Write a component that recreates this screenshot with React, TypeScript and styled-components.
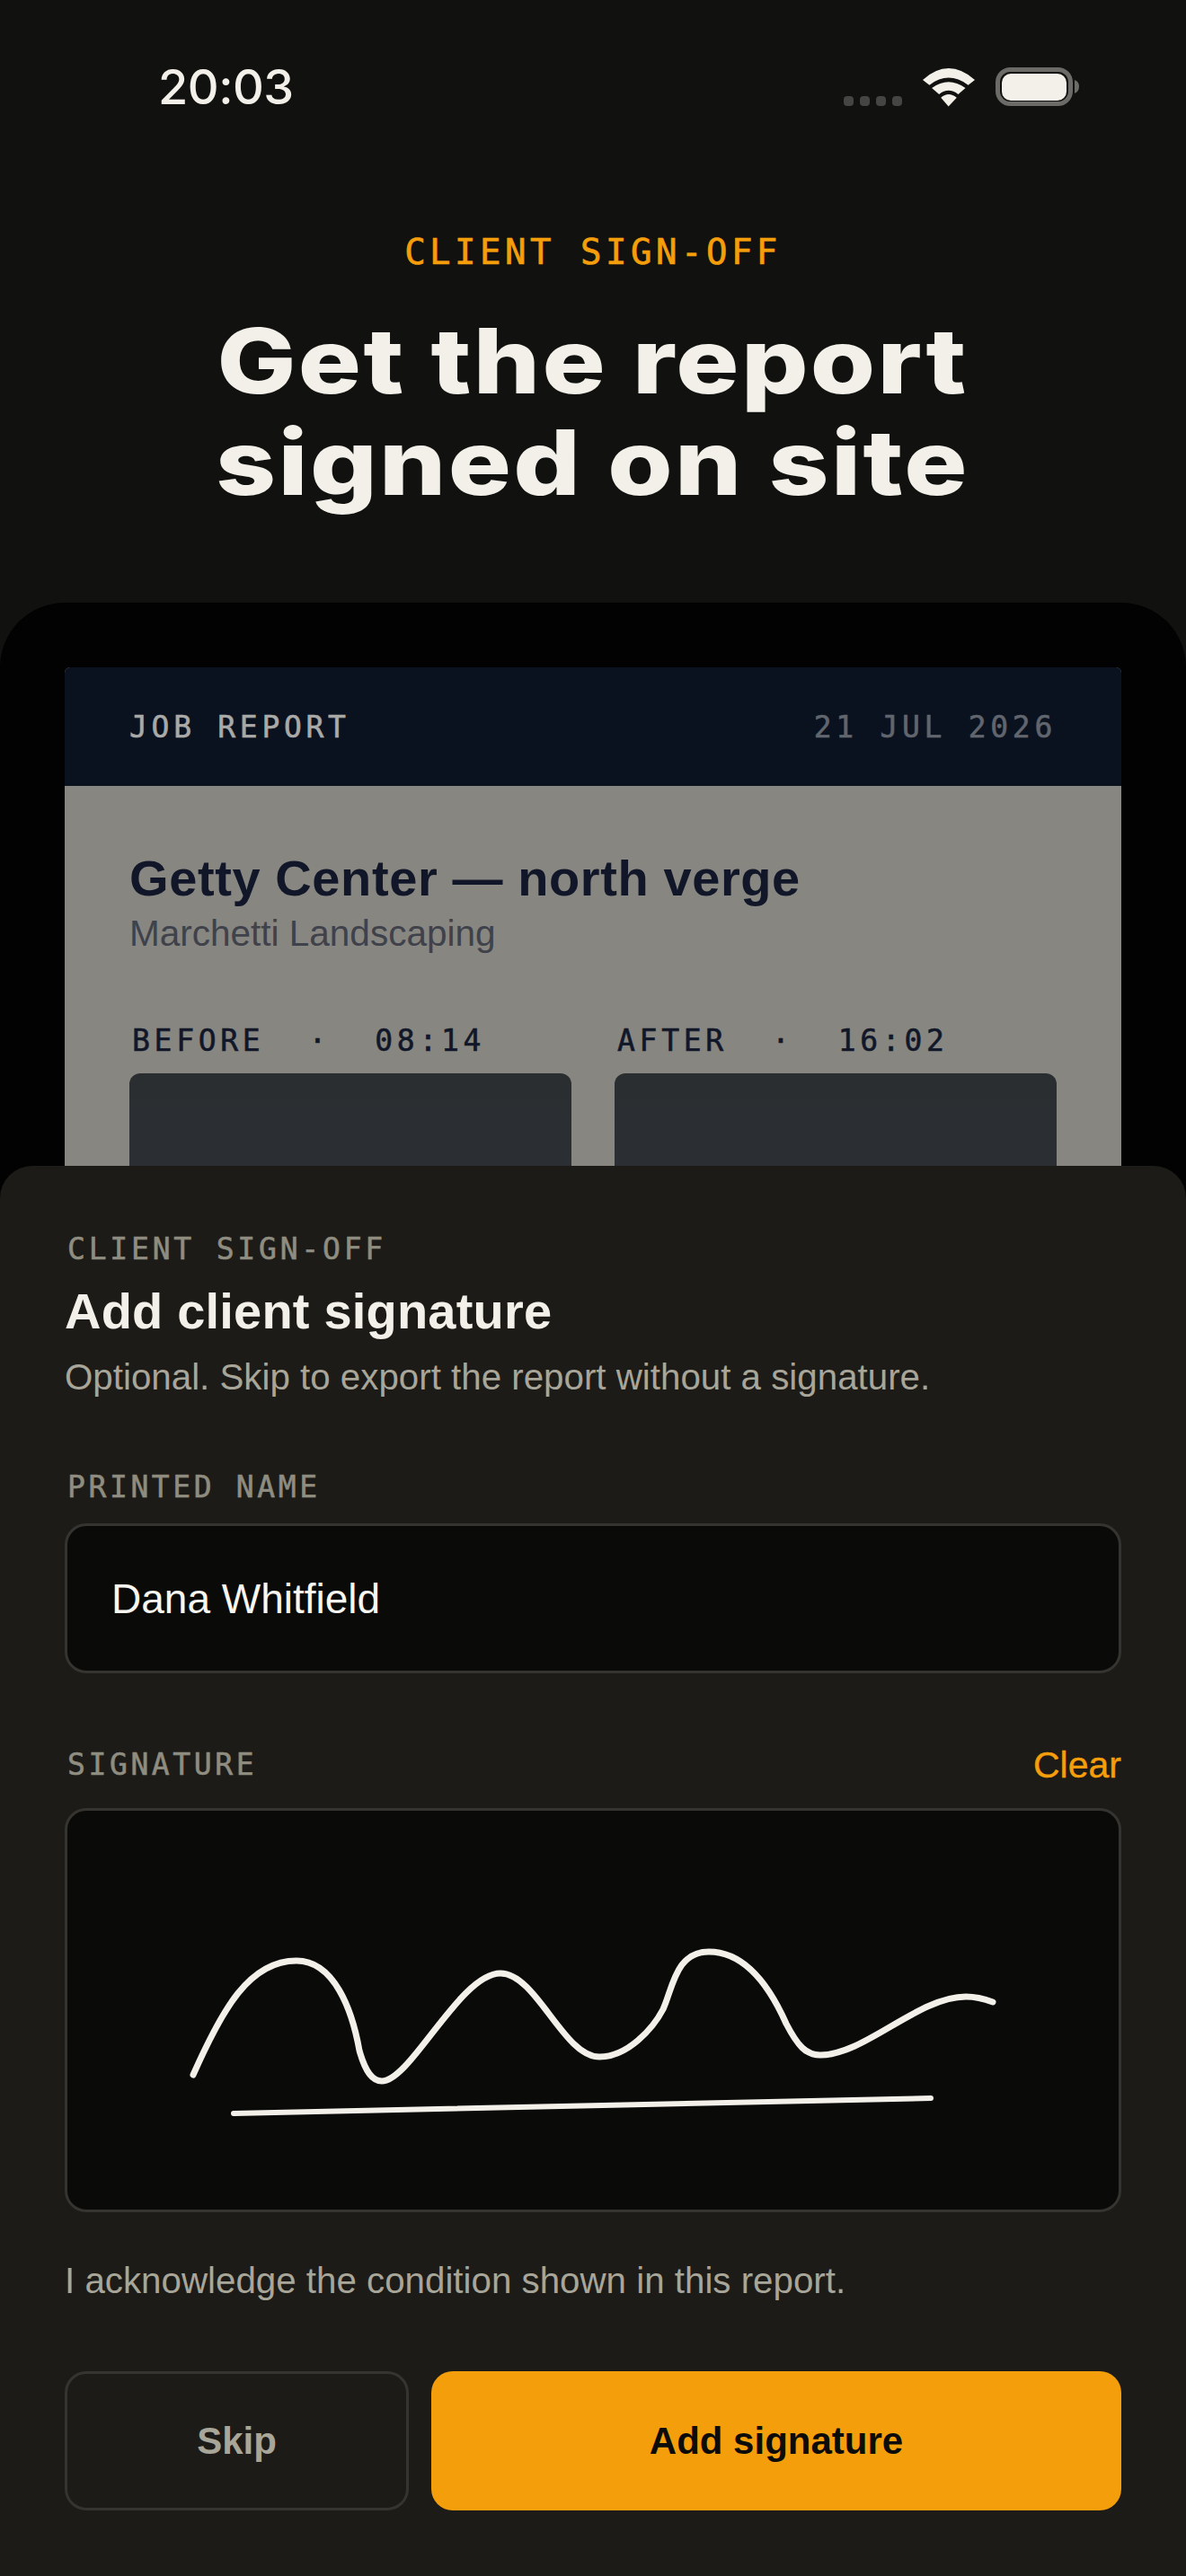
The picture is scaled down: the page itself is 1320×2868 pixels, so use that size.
import React from "react";
import styled, { createGlobalStyle } from "styled-components";

const Global = createGlobalStyle`
  html, body { margin: 0; padding: 0; background: #111110; }
  * { box-sizing: border-box; }
`;
const SANS = `"Liberation Sans", Arial, sans-serif`;
const MONO = `"DejaVu Sans Mono", monospace`;

const Screen = styled.div`
  position: relative; width: 1320px; height: 2868px; overflow: hidden;
  background: #111110; font-family: ${SANS};
`;
const StatusBar = styled.div`
  height: 118px; padding: 70px 118px 0 176px; display: flex; justify-content: space-between; align-items: center;
`;
const Time = styled.div`
  font-family: Inter, sans-serif; font-size: 54px; font-weight: 500; line-height: 56px; color: #f2f0e8; letter-spacing: -0.5px; margin-top: 6px;
`;
const StatusIcons = styled.div`display: flex; align-items: center; gap: 23px; margin-top: 6px;`;
const Signal = styled.div`display: flex; gap: 7px; align-self: flex-end; margin-bottom: 1px;`;
const SignalDot = styled.span`width: 11px; height: 11px; border-radius: 4px; background: #454543;`;
const Battery = styled.svg`display: block;`;

const Hero = styled.div`
  display: flex; flex-direction: column; align-items: center; padding-top: 146px;
`;
const Eyebrow = styled.div`
  font-family: ${MONO}; font-size: 39px; line-height: 34px; letter-spacing: 4.5px; color: #f59e0b; -webkit-text-stroke: 0.7px #f59e0b;
`;
const Headline = styled.h1`
  margin: 47px 0 0; text-align: center; font-family: Inter, sans-serif; font-weight: 800; font-size: 100px; line-height: 113.4px;
  letter-spacing: 2px; color: #f2f0e8; transform: scaleX(1.17);
`;
const DeviceFrame = styled.div`
  margin-top: 99px; height: 800px; padding: 72px 72px 0; background: #020202; border-radius: 72px 72px 0 0;
`;
const ReportPage = styled.div`height: 700px; background: #878680; border-radius: 6px 6px 0 0; overflow: hidden;`;
const ReportHeader = styled.div`
  height: 132px; padding: 3px 72px 0; display: flex; align-items: center; justify-content: space-between;
  background: #0a1220;
`;
const Mono = styled.span<{ $color: string; $ls?: number }>`
  font-family: ${MONO}; font-size: 33px; letter-spacing: ${p => p.$ls ?? 4.7}px; color: ${p => p.$color};
  -webkit-text-stroke: 0.6px ${p => p.$color}; white-space: pre; line-height: 40px;
`;
const ReportBody = styled.div`padding: 72px 72px 0;`;
const JobTitle = styled.div`
  font-family: ${SANS}; font-weight: 700; font-size: 56px; line-height: 62px; letter-spacing: 0.6px; color: #111729;
`;
const JobClient = styled.div`
  margin-top: 5px; font-size: 40.5px; line-height: 50px; color: #3f414b;
`;
const PhotoGrid = styled.div`
  margin-top: 79px; display: grid; grid-template-columns: 492px 492px; gap: 48px;
`;
const PhotoCol = styled.div`display: flex; flex-direction: column; gap: 20px;`;
const PhotoCaption = styled.div`padding-left: 3px; height: 32px; display: flex; align-items: center;`;
const Photo = styled.div`
  height: 200px; border-radius: 12px; background: linear-gradient(#2a2e31, #2c2e33);
`;

const Sheet = styled.section`
  position: absolute; left: 0; right: 0; top: 1298px; bottom: 0; background: #1c1b17; border-radius: 36px 36px 0 0;
  padding: 75px 72px 0;
`;
const SheetEyebrow = styled.div`padding-left: 3px; height: 36px; display: flex; align-items: center;`;
const SheetTitle = styled.h2`
  margin: 21px 0 0; font-family: ${SANS}; font-weight: 700; font-size: 56px; line-height: 60px; letter-spacing: 0.2px; color: #f2f0e8;
`;
const SheetHint = styled.p`
  margin: 19px 0 0; font-size: 40.3px; line-height: 50px; color: #a8a599;
`;
const FieldLabelRow = styled.div<{ $mt: number }>`
  margin-top: ${p => p.$mt}px; display: flex; justify-content: space-between; align-items: center; height: 40px; padding-left: 3px;
`;
const ClearLink = styled.span`font-size: 41px; color: #f59e0b; line-height: 40px; -webkit-text-stroke: 0.4px #f59e0b;`;
const NameInput = styled.div`
  margin-top: 20px; height: 167px; background: #0a0a09; border: 3px solid #353430; border-radius: 24px;
  padding: 0 49px; display: flex; align-items: center; font-size: 46px; color: #f7f6f0;
`;
const SigPad = styled.div`
  margin-top: 28px; height: 450px; background: #0a0a09; border: 3px solid #353430; border-radius: 24px; overflow: hidden;
`;
const Ack = styled.p`margin: 52px 0 0; font-size: 40.3px; line-height: 50px; color: #a8a599;`;
const Actions = styled.div`margin-top: 75px; display: grid; grid-template-columns: 383px 768px; gap: 25px;`;
const Btn = styled.div<{ $primary?: boolean }>`
  height: 155px; border-radius: 24px; display: flex; align-items: center; justify-content: center;
  font-size: 42px; font-weight: 700;
  color: ${p => (p.$primary ? "#0c0c0a" : "#a8a599")};
  background: ${p => (p.$primary ? "#f59e0b" : "transparent")};
  border: ${p => (p.$primary ? "none" : "3px solid #353430")};
`;

export default function App() {
  return (
    <Screen>
      <Global />
      <StatusBar>
        <Time>20:03</Time>
        <StatusIcons>
          <Signal>{[0, 1, 2, 3].map(i => <SignalDot key={i} />)}</Signal>
          <svg width="58" height="43" viewBox="435 75 172 127" style={{ display: "block" }}>
            <path fill="#f2f0e8" d="M435 113Q520 37 607 113L585 130Q520 82 457 130Z" />
            <path fill="#f2f0e8" d="M465 140Q520 100 576 140L552 161Q520 136 489 161Z" />
            <path fill="#f2f0e8" d="M495 172Q520 150 547 172L520 201Z" />
          </svg>
          <Battery width="94" height="44" viewBox="0 0 94 44">
            <rect x="2.5" y="2.5" width="81" height="38" rx="14" fill="none" stroke="#6c6b67" strokeWidth="5" />
            <rect x="7" y="7" width="72" height="30" rx="10" fill="#f2f0e8" />
            <path d="M88 14Q93 16 93 21Q93 27 88 29Z" fill="#6c6b67" />
          </Battery>
        </StatusIcons>
      </StatusBar>
      <Hero>
        <Eyebrow>CLIENT SIGN-OFF</Eyebrow>
        <Headline>Get the report<br />signed on site</Headline>
      </Hero>
      <DeviceFrame>
        <ReportPage>
          <ReportHeader>
            <Mono $color="#a9aaa8">JOB REPORT</Mono>
            <Mono $color="#61656d">21 JUL 2026</Mono>
          </ReportHeader>
          <ReportBody>
            <JobTitle>Getty Center — north verge</JobTitle>
            <JobClient>Marchetti Landscaping</JobClient>
            <PhotoGrid>
              <PhotoCol>
                <PhotoCaption><Mono $color="#111729">BEFORE  ·  08:14</Mono></PhotoCaption>
                <Photo />
              </PhotoCol>
              <PhotoCol>
                <PhotoCaption><Mono $color="#111729">AFTER  ·  16:02</Mono></PhotoCaption>
                <Photo />
              </PhotoCol>
            </PhotoGrid>
          </ReportBody>
        </ReportPage>
      </DeviceFrame>
      <Sheet>
        <SheetEyebrow><Mono $color="#8f8c80" $ls={3.8}>CLIENT SIGN-OFF</Mono></SheetEyebrow>
        <SheetTitle>Add client signature</SheetTitle>
        <SheetHint>Optional. Skip to export the report without a signature.</SheetHint>
        <FieldLabelRow $mt={77}><Mono $color="#8f8c80" $ls={3.6}>PRINTED NAME</Mono></FieldLabelRow>
        <NameInput>Dana Whitfield</NameInput>
        <FieldLabelRow $mt={82}>
          <Mono $color="#8f8c80" $ls={3.6}>SIGNATURE</Mono>
          <ClearLink>Clear</ClearLink>
        </FieldLabelRow>
        <SigPad>
          <svg width="1170" height="444" viewBox="3 3 1170 444" style={{ display: "block" }}>
            <path
              d="M143 297C175 225 205 170 258 170C300 170 320 225 328 270C335 295 343 304 353 304C385 304 440 184 485 184C525 184 555 277 595 277C627 277 655 245 666 224C677 200 680 160 717 160C755 160 783 195 803 240C816 265 825 275 841 275C890 275 950 210 1003 210C1015 210 1025 213 1033 216"
              fill="none" stroke="#f2f0e8" strokeWidth="7" strokeLinecap="round" strokeLinejoin="round"
            />
            <path d="M188 340L964 323" fill="none" stroke="#f2f0e8" strokeWidth="6" strokeLinecap="round" />
          </svg>
        </SigPad>
        <Ack>I acknowledge the condition shown in this report.</Ack>
        <Actions>
          <Btn>Skip</Btn>
          <Btn $primary>Add signature</Btn>
        </Actions>
      </Sheet>
    </Screen>
  );
}
